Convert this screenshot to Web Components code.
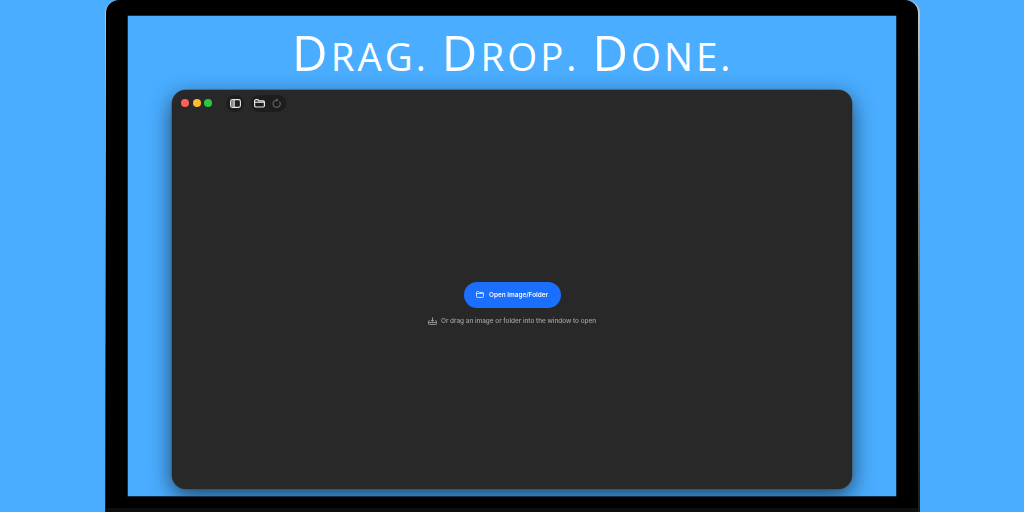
<!DOCTYPE html>
<html>
<head>
<meta charset="utf-8">
<title>Drag. Drop. Done.</title>
<style>
  html, body { margin: 0; height: 100%; background: #4aadff; overflow: hidden; }
  body { display: flex; justify-content: center; font-family: Inter, "Liberation Sans", sans-serif; }
</style>
</head>
<body>
<laptop-frame>
  <promo-title><span>D</span>rag. <span>D</span>rop. <span>D</span>one.</promo-title>
  <app-window>
    <open-panel></open-panel>
  </app-window>
</laptop-frame>

<script>
class LaptopFrame extends HTMLElement {
  constructor() {
    super();
    this.attachShadow({ mode: "open" });
    this.shadowRoot.innerHTML = `
      <style>
        :host {
          display: block;
          box-sizing: border-box;
          width: 815px;
          height: 512px;
          padding: 0 1.5px;
          background: linear-gradient(#c4c8cc, #8e9296 30%, #3c3f42 75%, #1c1d1e);
          border-radius: 14px 14px 0 0;
        }
        .bezel {
          box-sizing: border-box;
          height: 512px;
          padding: 15.5px 22px 16px 21.5px;
          background: #000;
          border-radius: 13px 13px 0 0;
          box-shadow: inset 0 -4px 0 #0e0e0e;
        }
        .screen {
          display: flex;
          flex-direction: column;
          align-items: center;
          height: 100%;
          background: #4aadff;
          overflow: hidden;
          box-shadow: 0 0 0 0.5px #1c5c94;
        }
      </style>
      <div class="bezel"><div class="screen"><slot></slot></div></div>`;
  }
}

class PromoTitle extends HTMLElement {
  constructor() {
    super();
    this.attachShadow({ mode: "open" });
    this.shadowRoot.innerHTML = `
      <style>
        :host {
          display: block;
          height: 74.5px;
          padding-left: 2px;
          font: 400 38.5px/73px "Open Sans", sans-serif;
          text-transform: uppercase;
          letter-spacing: 3px;
          color: #fff;
          white-space: nowrap;
        }
        ::slotted(span) { font-size: 49px; }
      </style>
      <slot></slot>`;
  }
}

class AppWindow extends HTMLElement {
  constructor() {
    super();
    this.attachShadow({ mode: "open" });
    this.shadowRoot.innerHTML = `
      <style>
        :host {
          display: flex;
          flex-direction: column;
          box-sizing: border-box;
          width: 680px;
          height: 399px;
          margin-left: .5px;
          background: #282828;
          border-radius: 14px;
          box-shadow: 0 0 0 0.5px #4a4a4a, 0 7px 22px rgba(0, 0, 0, .6);
        }
        .toolbar {
          display: flex;
          align-items: center;
          height: 26px;
          padding-left: 9px;
          flex: none;
        }
        .lights { display: flex; gap: 3.5px; margin-right: 14px; }
        .lights i { width: 8px; height: 8px; border-radius: 50%; }
        .pill {
          display: flex;
          align-items: center;
          height: 17px;
          border-radius: 9px;
          background: #1d1d1d;
          color: #e8e8e8;
        }
        .pill.one { width: 18px; justify-content: center; margin-right: 6.5px; }
        .pill.two { width: 35px; padding-left: 3px; gap: 7px; box-sizing: border-box; }
        svg { display: block; }
        .main { flex: 1; display: flex; }
      </style>
      <div class="toolbar">
        <div class="lights">
          <i style="background:#ff5f57"></i>
          <i style="background:#febc2e"></i>
          <i style="background:#28c840"></i>
        </div>
        <div class="pill one">
          <svg width="11" height="9" viewBox="0 0 11 9" fill="none" stroke="currentColor" stroke-width="1.1">
            <rect x=".6" y=".6" width="9.800" height="7.800" rx="1.800"/>
            <rect x="1.200" y="1.200" width="2.600" height="6.600" fill="#8f8f8f" stroke="none"/>
            <path d="M4.200 .8v7.400"/>
          </svg>
        </div>
        <div class="pill two">
          <svg width="11" height="9" viewBox="0 0 11 9" fill="none" stroke="currentColor" stroke-width="1.200">
            <path d="M.6 1.900a1.200 1.200 0 0 1 1.200-1.200h2.100l1 1.100h4.300a1.200 1.200 0 0 1 1.200 1.200v3.800a1.200 1.200 0 0 1-1.200 1.200H1.800A1.200 1.200 0 0 1 .6 6.800z"/>
            <path d="M.8 3.200h9.400"/>
          </svg>
          <svg width="9" height="10" viewBox="0 0 9 10" fill="none" stroke="#666" stroke-width="1.100">
            <path d="M7.500 3.600A3.600 3.600 0 1 1 4.500 2.200"/>
            <path d="M4.300 .3v3.600l2.300-1.800z" fill="#666" stroke="none"/>
          </svg>
        </div>
      </div>
      <div class="main"><slot></slot></div>`;
  }
}

class OpenPanel extends HTMLElement {
  constructor() {
    super();
    this.attachShadow({ mode: "open" });
    this.shadowRoot.innerHTML = `
      <style>
        :host {
          display: flex;
          flex-direction: column;
          align-items: center;
          flex: 1;
          padding-top: 165.500px;
          padding-left: .5px;
        }
        .btn {
          display: flex;
          align-items: center;
          justify-content: center;
          gap: 5px;
          width: 97px;
          height: 26px;
          border-radius: 13px;
          background: #1a6fff;
          color: #f2f6ff;
          font: 600 6.400px/1 Inter, "Liberation Sans", sans-serif;
        }
        .hint {
          display: flex;
          align-items: center;
          gap: 4px;
          margin-top: 9px;
          color: #a2a2a2;
          font: 500 6.400px/1 Inter, "Liberation Sans", sans-serif;
          white-space: nowrap;
        }
        span { padding-top: 1px; will-change: transform; }
        svg { display: block; }
      </style>
      <div class="btn">
        <svg width="8" height="7" viewBox="0 0 8 7" fill="none" stroke="currentColor" stroke-width=".8">
          <path d="M.5 1.400a.8.8 0 0 1 .8-.8h1.500l.7.8h3.200a.8.8 0 0 1 .8.8v3.400a.8.8 0 0 1-.8.8H1.300a.8.8 0 0 1-.8-.8z"/>
          <path d="M.6 2.500h6.800"/>
        </svg>
        <span>Open Image/Folder</span>
      </div>
      <div class="hint">
        <svg width="9" height="8" viewBox="0 0 9 8" fill="none" stroke="currentColor" stroke-width=".9">
          <path d="M2 3.600H1.500a1 1 0 0 0-1 1v2a1 1 0 0 0 1 1h6a1 1 0 0 0 1-1v-2a1 1 0 0 0-1-1H7"/>
          <path d="M.6 5.600h7.800"/>
          <path d="M4.500 .4v3.800M3 2.900l1.500 1.500L6 2.900"/>
        </svg>
        <span>Or drag an image or folder into the window to open</span>
      </div>`;
  }
}

customElements.define("laptop-frame", LaptopFrame);
customElements.define("promo-title", PromoTitle);
customElements.define("app-window", AppWindow);
customElements.define("open-panel", OpenPanel);
</script>
</body>
</html>
